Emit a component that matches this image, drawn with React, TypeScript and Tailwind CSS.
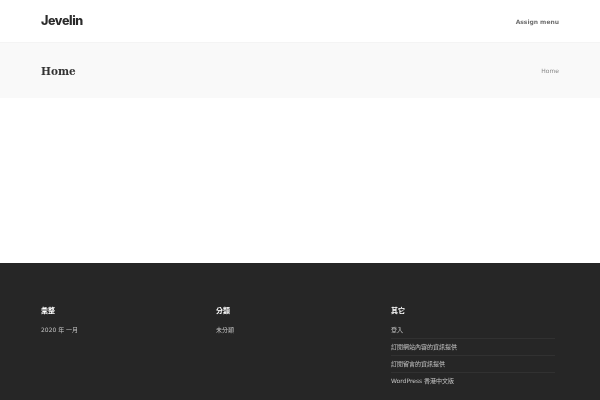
const cjk = "font-['DejaVu_Sans','Noto_Sans_CJK_TC',sans-serif]";

const links = ["登入", "訂閱網站內容的資訊提供", "訂閱留言的資訊提供", "WordPress 香港中文版"];

export default function App() {
  return (
    <div className={`h-[400px] overflow-hidden will-change-transform ${cjk}`}>
      {/* Header */}
      <header className="flex h-[43px] items-center justify-between border-b border-[#f4f4f4] px-[41px]">
        <span className="font-['Inter',sans-serif] text-[12.5px] font-extrabold tracking-[-0.4px] text-[#2b2b2b]">Jevelin</span>
        <span className="text-[6px] font-bold text-[#707070]">Assign menu</span>
      </header>

      {/* Title bar */}
      <div className="flex h-[55px] items-center justify-between bg-[#f9f9f9] px-[41px]">
        <h1 className="mt-[2px] font-['DejaVu_Serif',serif] text-[10.5px] font-bold text-[#333333]">Home</h1>
        <span className="text-[6px] text-[#8a8a8a]">Home</span>
      </div>

      <div className="h-[165px]" />

      {/* Footer */}
      <footer className="grid h-[137px] grid-cols-[175px_175px_164px] bg-[#262626] pl-[41px] pt-[42px]">
        <div>
          <h3 className="text-[7px] leading-[12px] font-bold text-white">彙整</h3>
          <p className="mt-[7px] text-[6px] leading-[12px] text-[#c4c4c4]">2020 年 一月</p>
        </div>
        <div>
          <h3 className="text-[7px] leading-[12px] font-bold text-white">分類</h3>
          <p className="mt-[7px] text-[6px] leading-[12px] text-[#c4c4c4]">未分類</p>
        </div>
        <div>
          <h3 className="text-[7px] leading-[12px] font-bold text-white">其它</h3>
          <ul className="mt-[5px]">
            {links.map((link, i) => (
              <li
                key={link}
                className={`h-[17px] text-[6px] leading-[16px] text-[#c4c4c4] ${i < links.length - 1 ? "border-b border-[#313131]" : ""}`}
              >
                {link}
              </li>
            ))}
          </ul>
        </div>
      </footer>
    </div>
  );
}
